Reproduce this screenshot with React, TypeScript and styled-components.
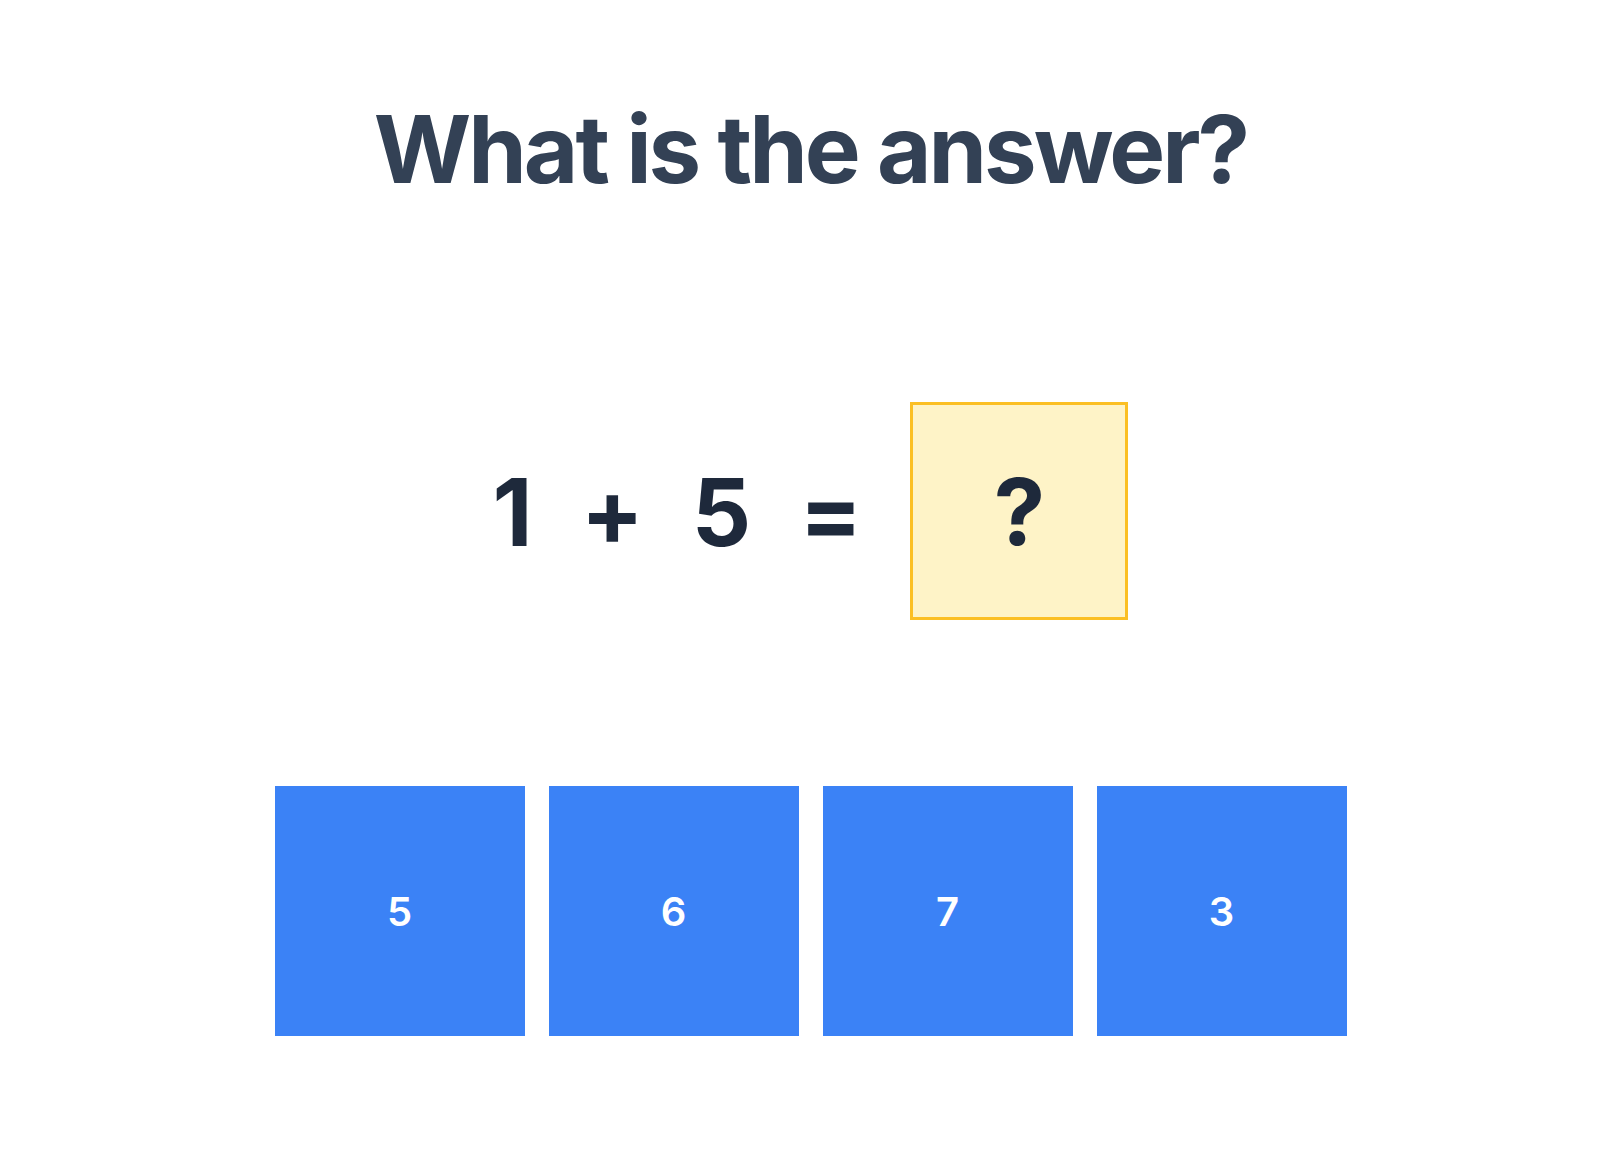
import { FC } from 'react'
import styled, { createGlobalStyle } from 'styled-components'

const GlobalStyle = createGlobalStyle`
  html, body {
    margin: 0;
    padding: 0;
    background: #ffffff;
  }
  body {
    font-family: Inter, "Noto Sans", "Liberation Sans", sans-serif;
  }
`

const options = [5, 6, 7, 3]

const App: FC = () => {
  return (
    <>
      <GlobalStyle />
      <Page>
        <Title>What is the answer?</Title>
        <Equation>
          <Term>1</Term>
          <Term>+</Term>
          <Term>5</Term>
          <Term>=</Term>
          <AnswerSlot>?</AnswerSlot>
        </Equation>
        <Choices>
          {options.map((n) => (
            <Choice key={n} type="button">
              {n}
            </Choice>
          ))}
        </Choices>
      </Page>
    </>
  )
}

export default App

export const Page = styled('main')`
  min-height: 1168px;
  box-sizing: border-box;
  padding: 102px 0 0 21px;
  display: flex;
  flex-direction: column;
  align-items: center;
`

export const Title = styled('h1')`
  margin: 0;
  font-size: 94px;
  line-height: 1;
  font-weight: 700;
  letter-spacing: -3px;
  color: #334155;
`

export const Equation = styled('div')`
  margin-top: 206px;
  display: flex;
  align-items: center;
  gap: 48px;
`

export const Term = styled('span')`
  margin-top: 3px;
  font-size: 93px;
  line-height: 1;
  font-weight: 700;
  color: #1e293b;
`

export const AnswerSlot = styled('div')`
  width: 212px;
  height: 212px;
  border: 3px solid #fbbf24;
  background: #fef3c7;
  display: flex;
  align-items: center;
  justify-content: center;
  font-size: 92px;
  font-weight: 700;
  color: #1e293b;
`

export const Choices = styled('div')`
  margin-top: 166px;
  display: flex;
  gap: 24px;
`

export const Choice = styled('button')`
  width: 250px;
  height: 250px;
  border: none;
  padding: 0;
  background: #3b82f6;
  color: #ffffff;
  font-family: inherit;
  font-size: 40px;
  font-weight: 600;
  cursor: pointer;
`
